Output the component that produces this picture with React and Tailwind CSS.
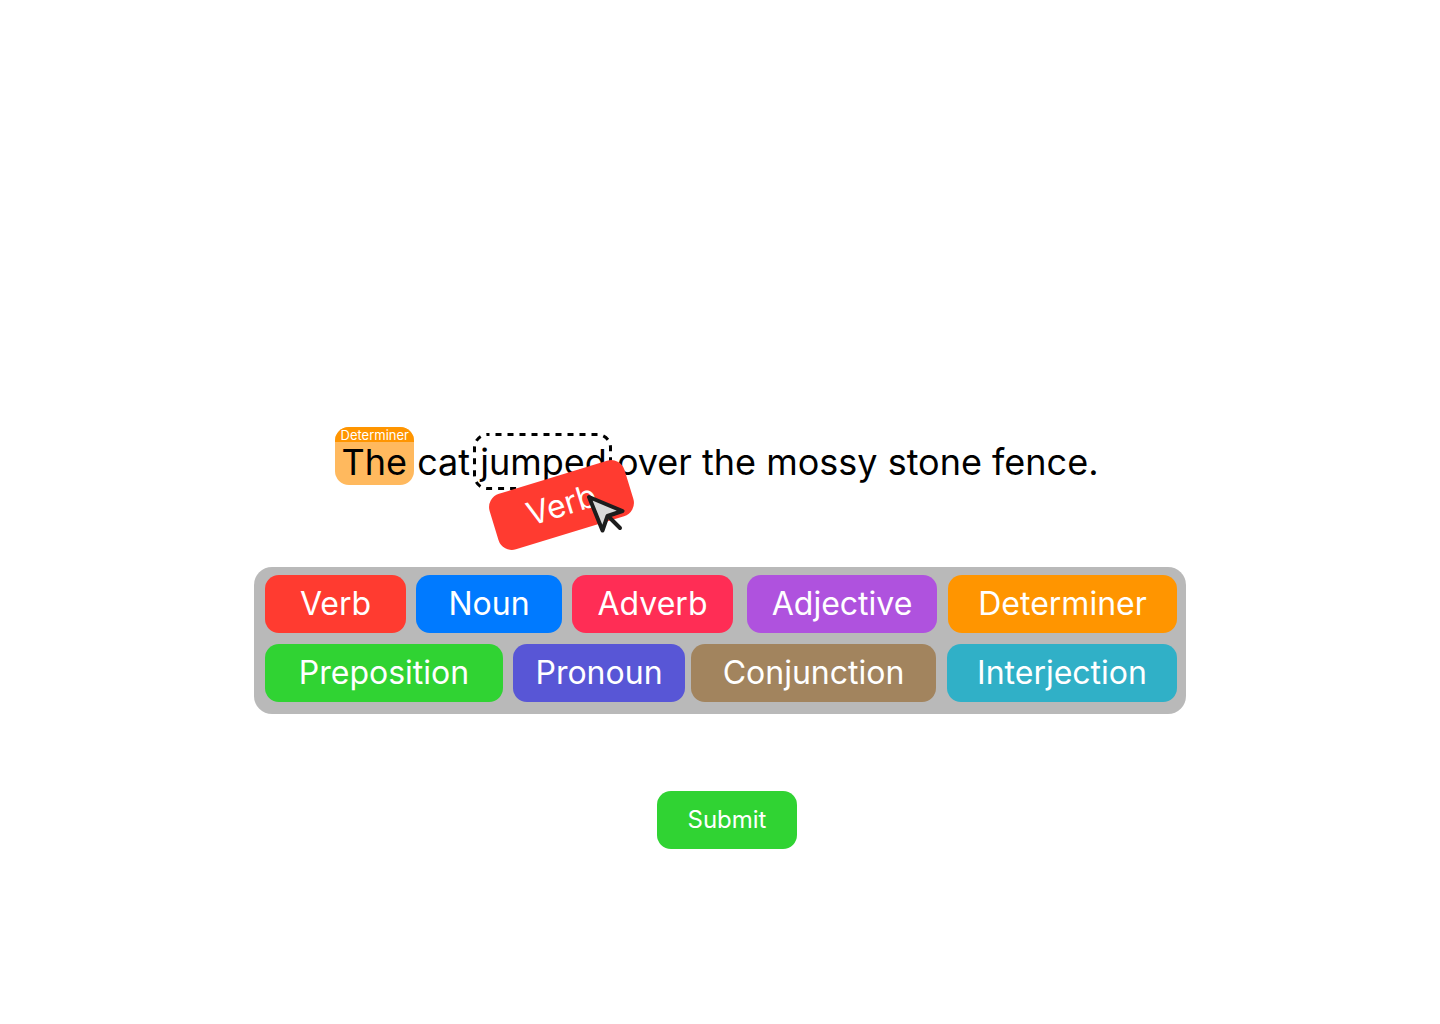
const chipBase =
  'flex h-[58px] items-center justify-center rounded-[14px] text-[32px] leading-10 font-normal text-white';

const rows = [
  {
    start: [
      { label: 'Verb', style: 'w-[141px] bg-[#ff3b30]' },
      { label: 'Noun', style: 'w-[146px] bg-[#007aff]' },
      { label: 'Adverb', style: 'w-[161px] bg-[#ff2d55]' },
    ],
    end: [
      { label: 'Adjective', style: 'w-[190px] bg-[#af52de]' },
      { label: 'Determiner', style: 'w-[229px] bg-[#ff9500]' },
    ],
  },
  {
    start: [
      { label: 'Preposition', style: 'w-[238px] bg-[#30d333]' },
      { label: 'Pronoun', style: 'w-[172px] bg-[#5856d6]' },
    ],
    end: [
      { label: 'Conjunction', style: 'w-[245px] bg-[#a2845e]' },
      { label: 'Interjection', style: 'w-[230px] bg-[#30b0c7]' },
    ],
  },
];

function Chip({ label, style }) {
  return (
    <button type="button" className={`${chipBase} ${style}`}>
      {label}
    </button>
  );
}

function Cursor() {
  return (
    <svg
      className="absolute top-[18px] left-[95px] z-10"
      width="42"
      height="42"
      viewBox="0 0 42 42"
      fill="none"
      stroke="#1d1d1d"
      strokeWidth="4"
      strokeLinecap="round"
      strokeLinejoin="round"
      aria-hidden="true"
    >
      <path d="M22 22L34 34" />
      <path d="M3 3L36.500 17L21.500 22L16.500 36.500Z" fill="#d9d9d9" />
    </svg>
  );
}

function TaggedWord({ tag, children }) {
  return (
    <span className="relative">
      <span className="absolute -top-[13px] -right-[7px] -left-1.5 -z-10 h-[58px] overflow-hidden rounded-[14px] bg-[#ffb95e]">
        <span className="flex h-[15px] items-center justify-center bg-[#ff9500] text-[13px] leading-4 text-white">
          {tag}
        </span>
      </span>
      {children}
    </span>
  );
}

function DropTarget({ children }) {
  return (
    <span className="relative">
      <svg
        className="absolute -top-[7px] -left-[7px] -z-10 h-[58px] w-[139px]"
        fill="none"
        aria-hidden="true"
      >
        <rect
          x="1.500"
          y="1.500"
          width="136"
          height="54"
          rx="13"
          stroke="#000"
          strokeWidth="3"
          strokeDasharray="6 6"
          strokeDashoffset="4"
        />
      </svg>
      {children}
      <span className="absolute top-9 left-[11px]">
        <span className="block -rotate-17">
          <Chip label="Verb" style="w-[141px] bg-[#ff3b30]" />
        </span>
        <Cursor />
      </span>
    </span>
  );
}

export default function App() {
  return (
    <main className="flex min-h-screen flex-col items-center bg-white pt-[435px] font-['Inter',sans-serif] text-black">
      <p className="relative isolate z-10 text-[36px] leading-[54px] whitespace-nowrap">
        <TaggedWord tag="Determiner">The</TaggedWord> cat <DropTarget>jumped</DropTarget> over the mossy stone fence.
      </p>
      <section
        aria-label="Parts of speech"
        className="mt-[78px] flex w-full max-w-[932px] flex-col gap-[11px] rounded-[18px] bg-[#b9b9b9] pt-2 pr-[9px] pb-3 pl-[11px]"
      >
        {rows.map(({ start, end }, i) => (
          <div key={i} className="flex justify-between">
            <div className="flex gap-2.5">
              {start.map((chip) => (
                <Chip key={chip.label} {...chip} />
              ))}
            </div>
            <div className="flex gap-[11px]">
              {end.map((chip) => (
                <Chip key={chip.label} {...chip} />
              ))}
            </div>
          </div>
        ))}
      </section>
      <div className="mt-[77px] flex w-full justify-center pl-3.5">
        <button
          type="submit"
          className="h-[58px] w-[140px] rounded-[14px] bg-[#30d333] text-2xl font-normal text-white"
        >
          Submit
        </button>
      </div>
    </main>
  );
}
